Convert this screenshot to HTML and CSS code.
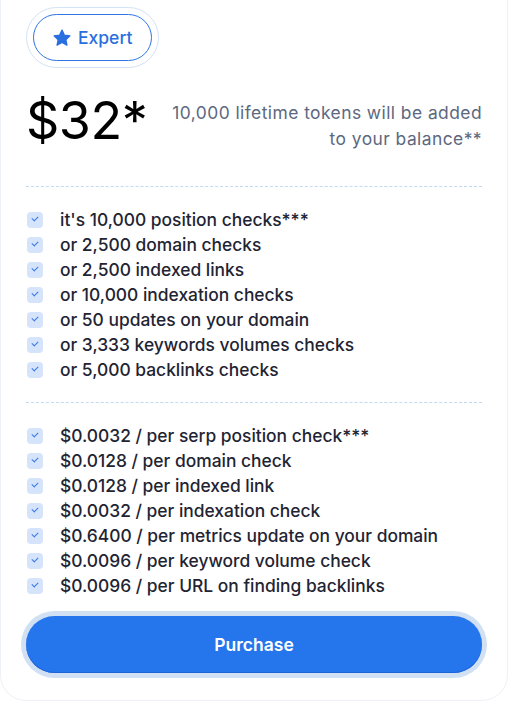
FILE: index.html
```html
<!DOCTYPE html>
<html>
<head>
<meta charset="utf-8">
<link rel="stylesheet" href="styles.css">
</head>
<body>
<div class="card">
  <div class="badge-ring">
    <div class="badge">
      <svg class="star" viewBox="0 0 24 24" width="20" height="20"><path d="M12 2.5l2.9 6.1 6.6.8-4.9 4.6 1.3 6.6L12 17.3l-5.9 3.3 1.3-6.6L2.5 9.4l6.6-.8z" fill="#2a6fe0" stroke="#2a6fe0" stroke-width="1.6" stroke-linejoin="round"/></svg>
      <span>Expert</span>
    </div>
  </div>
  <div class="price-row">
    <div class="price">$32*</div>
    <div class="note">10,000 lifetime tokens will be added to your balance**</div>
  </div>
  <div class="divider"></div>
  <ul class="list">
    <li><span class="cb"></span>it's 10,000 position checks***</li>
    <li><span class="cb"></span>or 2,500 domain checks</li>
    <li><span class="cb"></span>or 2,500 indexed links</li>
    <li><span class="cb"></span>or 10,000 indexation checks</li>
    <li><span class="cb"></span>or 50 updates on your domain</li>
    <li><span class="cb"></span>or 3,333 keywords volumes checks</li>
    <li><span class="cb"></span>or 5,000 backlinks checks</li>
  </ul>
  <div class="divider"></div>
  <ul class="list">
    <li><span class="cb"></span>$0.0032 / per serp position check***</li>
    <li><span class="cb"></span>$0.0128 / per domain check</li>
    <li><span class="cb"></span>$0.0128 / per indexed link</li>
    <li><span class="cb"></span>$0.0032 / per indexation check</li>
    <li><span class="cb"></span>$0.6400 / per metrics update on your domain</li>
    <li><span class="cb"></span>$0.0096 / per keyword volume check</li>
    <li><span class="cb"></span>$0.0096 / per URL on finding backlinks</li>
  </ul>
  <div class="btn-ring">
    <button class="btn">Purchase</button>
  </div>
</div>
</body>
</html>
```
FILE: styles.css
```css
* { box-sizing: border-box; }
html, body { margin: 0; padding: 0; background: #ffffff; }
body { font-family: Inter, "Noto Sans", sans-serif; color: #1f2433; }

.card {
  width: 508px;
  height: 731px;
  margin-top: -30px;
  padding: 36px 25px 0 25px;
  border: 1px solid #eef1f5;
  border-radius: 0 0 26px 26px;
  background: #fff;
}

.badge-ring {
  display: inline-flex;
  padding: 6px;
  border: 1px solid #d3e2f6;
  border-radius: 40px;
}
.badge {
  display: flex;
  align-items: center;
  gap: 6px;
  height: 47px;
  padding: 0 19px 0 18px;
  border: 1px solid #2f74e6;
  border-radius: 30px;
  color: #2a6fe0;
  font-size: 17.5px;
  font-weight: 500;
}
.star { display: block; }

.price-row {
  display: flex;
  justify-content: space-between;
  align-items: flex-start;
  margin-top: 27px;
}
.price {
  font-size: 52px;
  font-weight: 400;
  color: #000;
  line-height: 1;
  letter-spacing: -0.5px;
}
.note {
  width: 316px;
  text-align: right;
  font-size: 17.4px;
  line-height: 26px;
  letter-spacing: 0.45px;
  color: #5c6880;
  margin-top: 5px;
}

.divider {
  height: 0;
  border-top: 1px dashed #c3dbf2;
  margin-top: 34px;
}

.list {
  list-style: none;
  margin: 20px 0 0 0;
  padding: 0;
}
.list li {
  display: flex;
  align-items: center;
  height: 25px;
  font-size: 17.4px;
  font-weight: 500;
  color: #1f2433;
}
.cb {
  width: 16px;
  height: 16px;
  border-radius: 4px;
  background: #d6e4fb;
  margin: 0 17px 0 1px;
  position: relative;
  flex: none;
}
.cb::after {
  content: "";
  position: absolute;
  left: 5px;
  top: 4px;
  width: 5px;
  height: 3px;
  border-left: 1.3px solid #3a78e6;
  border-bottom: 1.3px solid #3a78e6;
  transform: rotate(-45deg);
}

.list + .divider { margin-top: 20px; }

.btn-ring {
  margin: 13px -5px 0 -5px;
  padding: 5px;
  border-radius: 40px;
  background: #d1e1f3;
}
.btn {
  display: block;
  width: 100%;
  height: 57px;
  border: none;
  border-radius: 30px;
  background: #2575ec;
  color: #fff;
  font-family: Inter, "Noto Sans", sans-serif;
  font-size: 17.5px;
  font-weight: 600;
  box-shadow: inset 0 -1px 0 #1d64d6;
}
```
